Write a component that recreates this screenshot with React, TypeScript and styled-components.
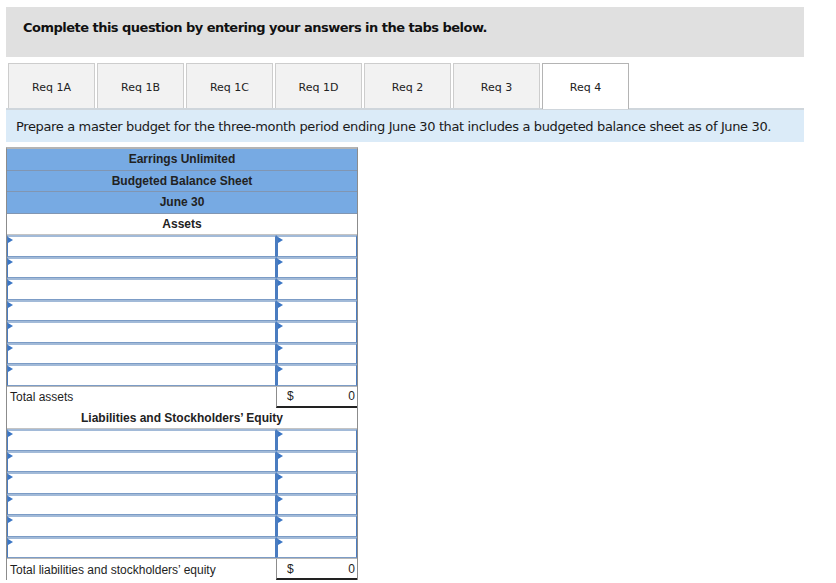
import React from "react";
import styled, { createGlobalStyle } from "styled-components";

const GlobalStyle = createGlobalStyle`
  html, body { margin: 0; padding: 0; background: #ffffff; }
  * { box-sizing: border-box; }
`;

const Page = styled.div`
  width: 798px;
  margin: 7px 0 0 6px;
  font-family: "DejaVu Sans", Verdana, sans-serif;
  color: #1a1a1a;
`;

const Banner = styled.div`
  height: 50px;
  background: #e0e0e0;
  padding: 13px 17px;
  font-size: 13px;
  font-weight: bold;
  letter-spacing: -0.52px;
  line-height: 16px;
  color: #111;
`;

const TabBar = styled.div`
  display: flex;
  gap: 2px;
  margin-top: 6px;
  padding-left: 2px;
  height: 45px;
`;

const Tab = styled.div<{ $active?: boolean }>`
  width: 87px;
  height: ${(p) => (p.$active ? "46px" : "45px")};
  display: flex;
  align-items: center;
  justify-content: center;
  border: 1.5px solid ${(p) => (p.$active ? "#b4b4b4" : "#cdcdcd")};
  border-bottom: none;
  background: ${(p) => (p.$active ? "#ffffff" : "#f2f2f2")};
  font-size: 11px;
  color: #222;
  padding-top: 2px;
  position: relative;
  z-index: ${(p) => (p.$active ? 1 : 0)};
`;

const Instructions = styled.div`
  height: 34px;
  background: #dbebf8;
  border-top: 2px solid #cfd6dc;
  padding: 0 10px;
  display: flex;
  align-items: center;
  font-size: 13px;
  letter-spacing: -0.36px;
  white-space: nowrap;
  color: #1a1a1a;
`;

const Sheet = styled.div`
  width: 352px;
  margin-top: 5px;
  border-top: 2px solid #b4b4b4;
  border-left: 1px solid #8c8c8c;
  border-right: 1px solid #8c8c8c;
  font-family: "Liberation Sans", Arial, sans-serif;
  font-size: 12px;
  color: #1e1e1e;
`;

const TitleRow = styled.div<{ $blue?: boolean }>`
  height: 21.55px;
  display: flex;
  align-items: center;
  justify-content: center;
  font-weight: bold;
  background: ${(p) => (p.$blue ? "#77aae3" : "#ffffff")};
  border-bottom: 1px solid ${(p) => (p.$blue ? "#8196b2" : "#c4c4c4")};
  color: #222;
`;

const InputRow = styled.div`
  height: 21.55px;
  display: grid;
  grid-template-columns: 269px 1fr;
`;

const InputCell = styled.div<{ $right?: boolean }>`
  position: relative;
  background: #ffffff;
  border-top: 2px solid #a2bad8;
  border-bottom: 1px solid #7c9cc6;
  border-left: ${(p) => (p.$right ? "2px" : "1px")} solid #4a7cc0;
  border-right: 1px solid #4a7cc0;
`;

const Marker = styled.span`
  position: absolute;
  top: 0;
  left: 0;
  width: 0;
  height: 0;
  border-top: 3px solid transparent;
  border-bottom: 3px solid transparent;
  border-left: 5px solid #3b76c4;
`;

const TotalRow = styled.div`
  height: 21.55px;
  display: grid;
  grid-template-columns: 269px 1fr;
  border-top: 1px solid #b8b8b8;
`;

const TotalLabel = styled.div`
  display: flex;
  align-items: center;
  padding-left: 3px;
`;

const Amount = styled.div`
  display: flex;
  align-items: center;
  justify-content: space-between;
  padding: 0 2px 0 10px;
  border-left: 1px solid #8c8c8c;
  border-bottom: 2px solid #222;
`;

function Inputs({ count }: { count: number }) {
  return (
    <>
      {Array.from({ length: count }).map((_, i) => (
        <InputRow key={i}>
          <InputCell>
            <Marker />
          </InputCell>
          <InputCell $right>
            <Marker />
          </InputCell>
        </InputRow>
      ))}
    </>
  );
}

const tabs = ["Req 1A", "Req 1B", "Req 1C", "Req 1D", "Req 2", "Req 3", "Req 4"];

export default function App() {
  return (
    <>
      <GlobalStyle />
      <Page>
        <Banner>Complete this question by entering your answers in the tabs below.</Banner>
        <TabBar>
          {tabs.map((t) => (
            <Tab key={t} $active={t === "Req 4"}>
              {t}
            </Tab>
          ))}
        </TabBar>
        <Instructions>
          Prepare a master budget for the three-month period ending June 30 that includes a budgeted balance sheet as of June 30.
        </Instructions>
        <Sheet>
          <TitleRow $blue>Earrings Unlimited</TitleRow>
          <TitleRow $blue>Budgeted Balance Sheet</TitleRow>
          <TitleRow $blue>June 30</TitleRow>
          <TitleRow>Assets</TitleRow>
          <Inputs count={7} />
          <TotalRow>
            <TotalLabel>Total assets</TotalLabel>
            <Amount>
              <span>$</span>
              <span>0</span>
            </Amount>
          </TotalRow>
          <TitleRow>Liabilities and Stockholders’ Equity</TitleRow>
          <Inputs count={6} />
          <TotalRow>
            <TotalLabel>Total liabilities and stockholders’ equity</TotalLabel>
            <Amount>
              <span>$</span>
              <span>0</span>
            </Amount>
          </TotalRow>
        </Sheet>
      </Page>
    </>
  );
}
